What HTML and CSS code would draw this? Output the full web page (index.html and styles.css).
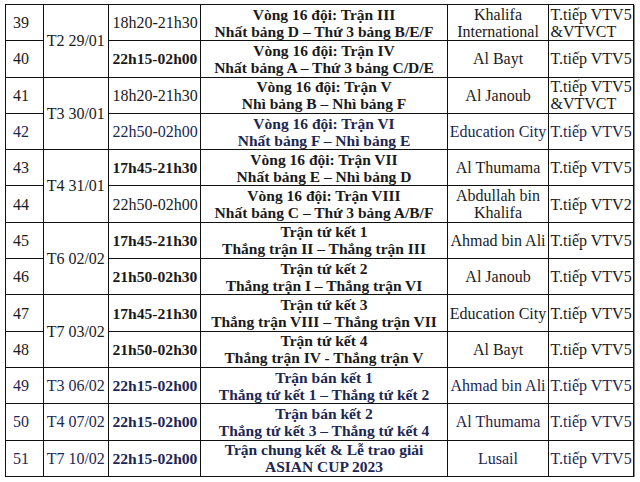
FILE: index.html
```html
<!DOCTYPE html>
<html lang="vi">
<head>
<meta charset="utf-8">
<title>Lịch thi đấu Asian Cup 2023</title>
<link rel="stylesheet" href="styles.css">
</head>
<body>
<table class="schedule">
  <colgroup>
    <col class="c-num"><col class="c-date"><col class="c-time"><col class="c-match"><col class="c-venue"><col class="c-tv">
  </colgroup>
  <tbody>
    <tr>
      <td class="num">39</td>
      <td class="date" rowspan="2">T2 29/01</td>
      <td class="time">18h20-21h30</td>
      <td class="match">Vòng 16 đội: Trận III<br>Nhất bảng D – Thứ 3 bảng B/E/F</td>
      <td class="venue">Khalifa<br>International</td>
      <td class="tv">T.tiếp VTV5<br>&amp;VTVCT</td>
    </tr>
    <tr>
      <td class="num">40</td>
      <td class="time bold">22h15-02h00</td>
      <td class="match">Vòng 16 đội: Trận IV<br>Nhất bảng A – Thứ 3 bảng C/D/E</td>
      <td class="venue">Al Bayt</td>
      <td class="tv">T.tiếp VTV5</td>
    </tr>
    <tr>
      <td class="num">41</td>
      <td class="date" rowspan="2">T3 30/01</td>
      <td class="time">18h20-21h30</td>
      <td class="match">Vòng 16 đội: Trận V<br>Nhì bảng B – Nhì bảng F</td>
      <td class="venue">Al Janoub</td>
      <td class="tv">T.tiếp VTV5<br>&amp;VTVCT</td>
    </tr>
    <tr class="navy">
      <td class="num">42</td>
      <td class="time">22h50-02h00</td>
      <td class="match">Vòng 16 đội: Trận VI<br>Nhất bảng F – Nhì bảng E</td>
      <td class="venue">Education City</td>
      <td class="tv">T.tiếp VTV5</td>
    </tr>
    <tr>
      <td class="num">43</td>
      <td class="date" rowspan="2">T4 31/01</td>
      <td class="time bold">17h45-21h30</td>
      <td class="match">Vòng 16 đội: Trận VII<br>Nhất bảng E – Nhì bảng D</td>
      <td class="venue">Al Thumama</td>
      <td class="tv">T.tiếp VTV5</td>
    </tr>
    <tr>
      <td class="num">44</td>
      <td class="time">22h50-02h00</td>
      <td class="match">Vòng 16 đội: Trận VIII<br>Nhất bảng C – Thứ 3 bảng A/B/F</td>
      <td class="venue">Abdullah bin<br>Khalifa</td>
      <td class="tv">T.tiếp VTV2</td>
    </tr>
    <tr>
      <td class="num">45</td>
      <td class="date" rowspan="2">T6 02/02</td>
      <td class="time bold">17h45-21h30</td>
      <td class="match">Trận tứ kết 1<br>Thắng trận II – Thắng trận III</td>
      <td class="venue">Ahmad bin Ali</td>
      <td class="tv">T.tiếp VTV5</td>
    </tr>
    <tr>
      <td class="num">46</td>
      <td class="time bold">21h50-02h30</td>
      <td class="match">Trận tứ kết 2<br>Thắng trận I – Thắng trận VI</td>
      <td class="venue">Al Janoub</td>
      <td class="tv">T.tiếp VTV5</td>
    </tr>
    <tr>
      <td class="num">47</td>
      <td class="date" rowspan="2">T7 03/02</td>
      <td class="time bold">17h45-21h30</td>
      <td class="match">Trận tứ kết 3<br>Thắng trận VIII – Thắng trận VII</td>
      <td class="venue">Education City</td>
      <td class="tv">T.tiếp VTV5</td>
    </tr>
    <tr>
      <td class="num">48</td>
      <td class="time bold">21h50-02h30</td>
      <td class="match">Trận tứ kết 4<br>Thắng trận IV - Thắng trận V</td>
      <td class="venue">Al Bayt</td>
      <td class="tv">T.tiếp VTV5</td>
    </tr>
    <tr class="navy">
      <td class="num">49</td>
      <td class="date">T3 06/02</td>
      <td class="time bold">22h15-02h00</td>
      <td class="match">Trận bán kết 1<br>Thắng tứ kết 1 – Thắng tứ kết 2</td>
      <td class="venue">Ahmad bin Ali</td>
      <td class="tv">T.tiếp VTV5</td>
    </tr>
    <tr class="navy">
      <td class="num">50</td>
      <td class="date">T4 07/02</td>
      <td class="time bold">22h15-02h00</td>
      <td class="match">Trận bán kết 2<br>Thắng tứ kết 3 – Thắng tứ kết 4</td>
      <td class="venue">Al Thumama</td>
      <td class="tv">T.tiếp VTV5</td>
    </tr>
    <tr class="navy">
      <td class="num">51</td>
      <td class="date">T7 10/02</td>
      <td class="time bold">22h15-02h00</td>
      <td class="match">Trận chung kết &amp; Lễ trao giải<br>ASIAN CUP 2023</td>
      <td class="venue">Lusail</td>
      <td class="tv">T.tiếp VTV5</td>
    </tr>
  </tbody>
</table>
</body>
</html>
```

FILE: styles.css
```css
html, body {
  margin: 0;
  padding: 0;
  background: #ffffff;
}

body {
  padding: 4px 0 0 5px;
  font-family: "Liberation Serif", "Times New Roman", serif;
  font-size: 16px;
  color: #1a1a1a;
}

.schedule {
  border-collapse: collapse;
  table-layout: fixed;
  width: 628px;
  border: 1.5px solid #111;
  box-shadow: 1px 1px 0 #888;
}

.c-num { width: 38px; }
.c-date { width: 64.5px; }
.c-time { width: 92.5px; }
.c-match { width: 247px; }
.c-venue { width: 101px; }
.c-tv { width: 85px; }

.schedule tr {
  height: 36.3px;
}

.schedule td {
  border: 1px solid #111;
  padding: 0;
  vertical-align: middle;
  line-height: 17px;
  white-space: nowrap;
  overflow: hidden;
}

.num {
  padding-left: 7px !important;
  text-align: left;
}

.date {
  text-align: center;
}

.time {
  padding-left: 4px !important;
  text-align: left;
}

.bold {
  font-weight: bold;
  font-size: 15.6px;
}

.match {
  text-align: center;
  font-weight: bold;
  font-size: 15.5px;
}

.venue {
  text-align: center;
}

.tv {
  padding-left: 1.5px !important;
  text-align: left;
}

.navy td {
  color: #1c2752;
}
```
